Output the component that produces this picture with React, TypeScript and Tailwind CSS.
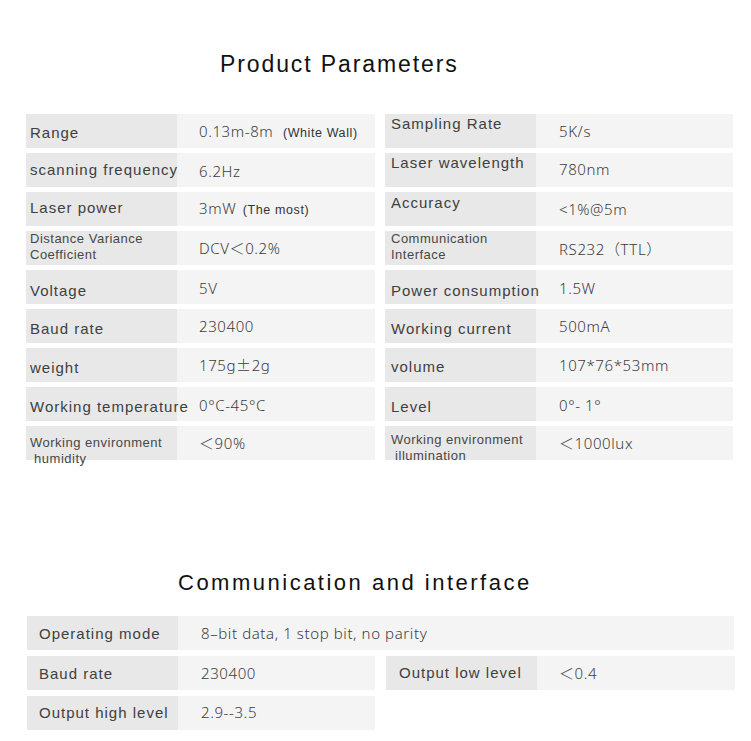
import React from 'react';

type Cell = {
  label: React.ReactNode;
  value: React.ReactNode;
  lpt: string;
  vpt: string;
  small?: boolean;
};

const labelFont = "font-['Liberation_Sans','Noto_Sans_CJK_SC',sans-serif]";
const valueFont = "font-['Noto_Sans','Noto_Sans_CJK_SC',sans-serif]";

const leftRows: Cell[] = [
  {
    label: 'Range',
    value: (
      <>
        0.13m-8m{' '}
        <span className={`${labelFont} text-[12.5px] tracking-[0.6px] text-[#333] ml-[5px]`}>(White Wall)</span>
      </>
    ),
    lpt: 'pt-[10px]',
    vpt: 'pt-[8px]',
  },
  { label: 'scanning frequency', value: '6.2Hz', lpt: 'pt-[8px]', vpt: 'pt-[9px]' },
  {
    label: 'Laser power',
    value: (
      <>
        3mW{' '}
        <span className={`${labelFont} text-[12.5px] tracking-[0.6px] text-[#333] ml-[2px]`}>(The most)</span>
      </>
    ),
    lpt: 'pt-[7px]',
    vpt: 'pt-[7px]',
  },
  {
    label: (
      <>
        Distance Variance
        <br />
        Coefficient
      </>
    ),
    value: 'DCV＜0.2%',
    lpt: 'pt-0',
    vpt: 'pt-[8px]',
    small: true,
  },
  { label: 'Voltage', value: '5V', lpt: 'pt-[12px]', vpt: 'pt-[9px]' },
  { label: 'Baud rate', value: '230400', lpt: 'pt-[11px]', vpt: 'pt-[8px]' },
  {
    label: 'weight',
    value: (
      <>
        175g<span className="font-['Noto_Sans_CJK_SC',sans-serif]">±</span>2g
      </>
    ),
    lpt: 'pt-[11px]',
    vpt: 'pt-[8px]',
  },
  { label: 'Working temperature', value: '0°C-45°C', lpt: 'pt-[11px]', vpt: 'pt-[9px]' },
  {
    label: (
      <>
        Working environment
        <br />
        {'\u00a0humidity'}
      </>
    ),
    value: '＜90%',
    lpt: 'pt-[9px]',
    vpt: 'pt-[8px]',
    small: true,
  },
];

const rightRows: Cell[] = [
  { label: 'Sampling Rate', value: '5K/s', lpt: 'pt-[1px]', vpt: 'pt-[8px]' },
  { label: 'Laser wavelength', value: '780nm', lpt: 'pt-[1px]', vpt: 'pt-[7px]' },
  { label: 'Accuracy', value: '<1%@5m', lpt: 'pt-[2px]', vpt: 'pt-[8px]' },
  {
    label: (
      <>
        Communication
        <br />
        Interface
      </>
    ),
    value: 'RS232（TTL）',
    lpt: 'pt-0',
    vpt: 'pt-[9px]',
    small: true,
  },
  { label: 'Power consumption', value: '1.5W', lpt: 'pt-[12px]', vpt: 'pt-[9px]' },
  { label: 'Working current', value: '500mA', lpt: 'pt-[11px]', vpt: 'pt-[8px]' },
  { label: 'volume', value: '107*76*53mm', lpt: 'pt-[10px]', vpt: 'pt-[8px]' },
  { label: 'Level', value: '0°- 1°', lpt: 'pt-[11px]', vpt: 'pt-[9px]' },
  {
    label: (
      <>
        Working environment
        <br />
        {'\u00a0illumination'}
      </>
    ),
    value: '＜1000lux',
    lpt: 'pt-[6px]',
    vpt: 'pt-[8px]',
    small: true,
  },
];

const ParamRow = ({ row, labelPad, valuePad }: { row: Cell; labelPad: string; valuePad: string }) => (
  <div className="flex h-[34px]">
    <div className={`relative z-10 w-[151px] shrink-0 bg-[#e8e8e8] ${labelPad} ${row.lpt}`}>
      {row.small ? (
        <div className={`${labelFont} text-[13px] leading-[16px] tracking-[0.5px] text-[#474747] whitespace-nowrap`}>
          {row.label}
        </div>
      ) : (
        <div className={`${labelFont} text-[15px] leading-[18px] tracking-[1px] text-[#404040] whitespace-nowrap`}>
          {row.label}
        </div>
      )}
    </div>
    <div className={`flex-1 bg-[#f4f4f4] ${valuePad} ${row.vpt}`}>
      <div className={`${valueFont} font-light text-[15px] leading-[18px] tracking-[0.6px] text-[#3c3c3c] whitespace-nowrap`}>
        {row.value}
      </div>
    </div>
  </div>
);

const BottomCell = ({
  label,
  value,
  lpt,
  vpt,
  labelPad,
  valuePad,
}: {
  label: string;
  value: string;
  lpt: string;
  vpt: string;
  labelPad: string;
  valuePad: string;
}) => (
  <>
    <div className={`relative z-10 w-[151px] shrink-0 bg-[#e8e8e8] ${labelPad} ${lpt}`}>
      <div className={`${labelFont} text-[15px] leading-[18px] tracking-[1px] text-[#404040] whitespace-nowrap`}>
        {label}
      </div>
    </div>
    <div className={`flex-1 bg-[#f4f4f4] ${valuePad} ${vpt}`}>
      <div className={`${valueFont} font-light text-[15px] leading-[18px] tracking-[0.6px] text-[#3c3c3c] whitespace-nowrap`}>
        {value}
      </div>
    </div>
  </>
);

export default function App() {
  return (
    <div className="w-[751px] h-[741px] bg-white overflow-hidden">
      <h1
        className={`${labelFont} pt-[51px] pl-[220px] text-[23px] leading-[26px] tracking-[1.9px] text-[#111] font-normal`}
      >
        Product Parameters
      </h1>

      <div className="mt-[37px] flex gap-[10px] pl-[26px] w-[733px]">
        <div className="w-[349px] flex flex-col gap-[5px]">
          {leftRows.map((r, i) => (
            <ParamRow key={i} row={r} labelPad="pl-[4px]" valuePad="pl-[22px]" />
          ))}
        </div>
        <div className="flex-1 flex flex-col gap-[5px]">
          {rightRows.map((r, i) => (
            <ParamRow key={i} row={r} labelPad="pl-[6px]" valuePad="pl-[23px]" />
          ))}
        </div>
      </div>

      <h2
        className={`${labelFont} mt-[110px] pl-[178px] text-[22px] leading-[26px] tracking-[2.5px] text-[#111] font-normal`}
      >
        Communication and interface
      </h2>

      <div className="mt-[20px] ml-[27px] w-[708px] flex flex-col gap-[6px]">
        <div className="flex h-[34px] w-[707px]">
          <BottomCell
            label="Operating mode"
            value="8–bit data, 1 stop bit, no parity"
            lpt="pt-[9px]"
            vpt="pt-[8px]"
            labelPad="pl-[12px]"
            valuePad="pl-[23px]"
          />
        </div>
        <div className="flex h-[34px] gap-[11px]">
          <div className="flex w-[348px]">
            <BottomCell
              label="Baud rate"
              value="230400"
              lpt="pt-[9px]"
              vpt="pt-[8px]"
              labelPad="pl-[12px]"
              valuePad="pl-[23px]"
            />
          </div>
          <div className="flex flex-1">
            <BottomCell
              label="Output low level"
              value="＜0.4"
              lpt="pt-[8px]"
              vpt="pt-[8px]"
              labelPad="pl-[13px]"
              valuePad="pl-[22px]"
            />
          </div>
        </div>
        <div className="flex h-[34px] w-[348px]">
          <BottomCell
            label="Output high level"
            value="2.9--3.5"
            lpt="pt-[8px]"
            vpt="pt-[7px]"
            labelPad="pl-[12px]"
            valuePad="pl-[23px]"
          />
        </div>
      </div>
    </div>
  );
}
